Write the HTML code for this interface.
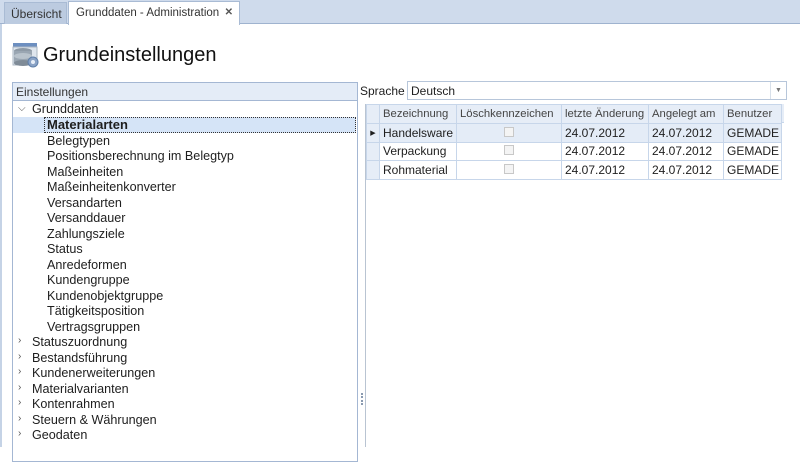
<!DOCTYPE html>
<html><head><meta charset="utf-8"><style>
*{box-sizing:border-box;margin:0;padding:0}
body{width:800px;height:447px;overflow:hidden;background:#fff;font-family:"Liberation Sans",sans-serif;font-size:12px;color:#1e1e1e;position:relative}
.abs{position:absolute}
.tabbar{left:0;top:0;width:800px;height:24px;background:#cfdbec;border-bottom:1px solid #9fb3cf}
.tab1{left:4px;top:2px;width:63px;height:22px;background:#bccbe0;border:1px solid #a9bbd4;border-bottom:none;color:#333;font-size:12px;padding:4px 0 0 6px}
.tab2{left:68px;top:1px;width:172px;height:24px;background:#fff;border:1px solid #a9bbd4;border-bottom:none;padding:5px 0 0 7px;font-size:11.5px;color:#333}
.tab2 b{position:absolute;right:6px;top:5px;font-size:10px;color:#555}
.lb{left:0;top:24px;width:2px;height:423px;background:#c5d3e6}
.title{left:43px;top:44px;font-size:20px;color:#111}
.panel{left:12px;top:82px;width:346px;height:380px;border:1px solid #a4b7d3}
.phead{left:13px;top:83px;width:344px;height:18px;background:#e4ecf7;border-bottom:1px solid #a4b7d3;padding:2px 0 0 3px;color:#333}
.row{position:absolute;height:16px;font-size:12.6px;line-height:16px;white-space:nowrap}
.sel{left:13px;top:117px;width:343px;height:16px;background:#d5e4f7}
.selb{left:44px;top:117px;width:312px;height:16px;border:1px dotted #333}
.arr{position:absolute;left:18px;font-size:10px;color:#555}
table{border-collapse:collapse;position:absolute;left:366px;top:104px;table-layout:fixed;width:415px}
td{height:18.5px;border:1px solid #c7d6ea;padding:0 3px;font-size:12px;white-space:nowrap;overflow:hidden}
th{height:19px;border:1px solid #c7d6ea;background:#e6edf7;font-weight:normal;text-align:left;padding:0 3px;color:#444;font-size:11.3px;white-space:nowrap;overflow:hidden}
.cb{display:inline-block;width:10px;height:10px;border:1px solid #c8c8c8;background:#f4f4f4}
</style></head><body>
<div class="abs tabbar"></div>
<div class="abs tab1">Übersicht</div>
<div class="abs tab2">Grunddaten - Administration<b>✕</b></div>
<div class="abs lb"></div>
<svg class="abs" style="left:12px;top:43px" width="28" height="26" viewBox="0 0 28 26">
<rect x="1" y="0" width="24" height="4" fill="#6d8fc0"/>
<rect x="1" y="4" width="24" height="18" fill="#dfe6ee" stroke="#aab5c2"/>
<ellipse cx="11" cy="8" rx="9" ry="3" fill="#8e9aa6"/>
<rect x="2" y="8" width="18" height="12" fill="#9aa6b2"/>
<ellipse cx="11" cy="13" rx="9" ry="3" fill="#b9c3cc"/>
<ellipse cx="11" cy="20" rx="9" ry="3" fill="#7f8b97"/>
<circle cx="21" cy="19" r="5" fill="#8aa3c6" stroke="#5f7fa9"/>
<circle cx="21" cy="19" r="2" fill="#e7eef7"/>
</svg>
<div class="abs title">Grundeinstellungen</div>
<div class="abs panel"></div>
<div class="abs phead">Einstellungen</div>
<div class="abs sel"></div><div class="abs selb"></div>
<div class="row" style="left:32px;top:101px">Grunddaten</div><span class="arr" style="top:103px">⌵</span>
<div class="row" style="left:47px;top:117px;font-weight:bold;font-size:13px">Materialarten</div>
<div class="row" style="left:47px;top:133px">Belegtypen</div>
<div class="row" style="left:47px;top:148px">Positionsberechnung im Belegtyp</div>
<div class="row" style="left:47px;top:164px">Maßeinheiten</div>
<div class="row" style="left:47px;top:179px">Maßeinheitenkonverter</div>
<div class="row" style="left:47px;top:195px">Versandarten</div>
<div class="row" style="left:47px;top:210px">Versanddauer</div>
<div class="row" style="left:47px;top:226px">Zahlungsziele</div>
<div class="row" style="left:47px;top:241px">Status</div>
<div class="row" style="left:47px;top:257px">Anredeformen</div>
<div class="row" style="left:47px;top:272px">Kundengruppe</div>
<div class="row" style="left:47px;top:288px">Kundenobjektgruppe</div>
<div class="row" style="left:47px;top:303px">Tätigkeitsposition</div>
<div class="row" style="left:47px;top:319px">Vertragsgruppen</div>
<div class="row" style="left:32px;top:334px">Statuszuordnung</div><span class="arr" style="top:335px">›</span>
<div class="row" style="left:32px;top:350px">Bestandsführung</div><span class="arr" style="top:351px">›</span>
<div class="row" style="left:32px;top:365px">Kundenerweiterungen</div><span class="arr" style="top:366px">›</span>
<div class="row" style="left:32px;top:381px">Materialvarianten</div><span class="arr" style="top:382px">›</span>
<div class="row" style="left:32px;top:396px">Kontenrahmen</div><span class="arr" style="top:397px">›</span>
<div class="row" style="left:32px;top:412px">Steuern &amp; Währungen</div><span class="arr" style="top:413px">›</span>
<div class="row" style="left:32px;top:427px">Geodaten</div><span class="arr" style="top:428px">›</span>
<div class="abs" style="left:361px;top:393px;width:2px;height:12px;border-left:2px dotted #8a9ab0"></div>
<div class="abs" style="left:365px;top:104px;width:1px;height:343px;background:#b9c4d2"></div>
<div class="row" style="left:360px;top:83px;font-size:12px">Sprache</div>
<div class="abs" style="left:407px;top:81px;width:380px;height:19px;border:1px solid #b7c6da;padding:2px 0 0 3px">Deutsch<span style="position:absolute;right:0;top:0;width:16px;height:17px;border-left:1px solid #d8e0ea;font-size:7px;color:#777;text-align:center;line-height:17px">▼</span></div>
<div class="abs" style="left:366px;top:104px;width:418px;height:19px;background:#e6edf7;border-bottom:1px solid #c7d6ea"></div>
<table>
<colgroup><col style="width:13px"><col style="width:77px"><col style="width:105px"><col style="width:87px"><col style="width:75px"><col style="width:58px"></colgroup>
<tr><th style="padding:0"></th><th>Bezeichnung</th><th>Löschkennzeichen</th><th>letzte Änderung</th><th>Angelegt am</th><th>Benutzer</th></tr>
<tr style="background:#e4ecf7"><td style="padding:0;font-size:7px;text-align:center;background:#e6edf7">▶</td><td>Handelsware</td><td style="text-align:center"><span class="cb"></span></td><td>24.07.2012</td><td>24.07.2012</td><td>GEMADE</td></tr>
<tr><td style="background:#e6edf7"></td><td>Verpackung</td><td style="text-align:center"><span class="cb"></span></td><td>24.07.2012</td><td>24.07.2012</td><td>GEMADE</td></tr>
<tr><td style="background:#e6edf7"></td><td>Rohmaterial</td><td style="text-align:center"><span class="cb"></span></td><td>24.07.2012</td><td>24.07.2012</td><td>GEMADE</td></tr>
</table>
</body></html>
